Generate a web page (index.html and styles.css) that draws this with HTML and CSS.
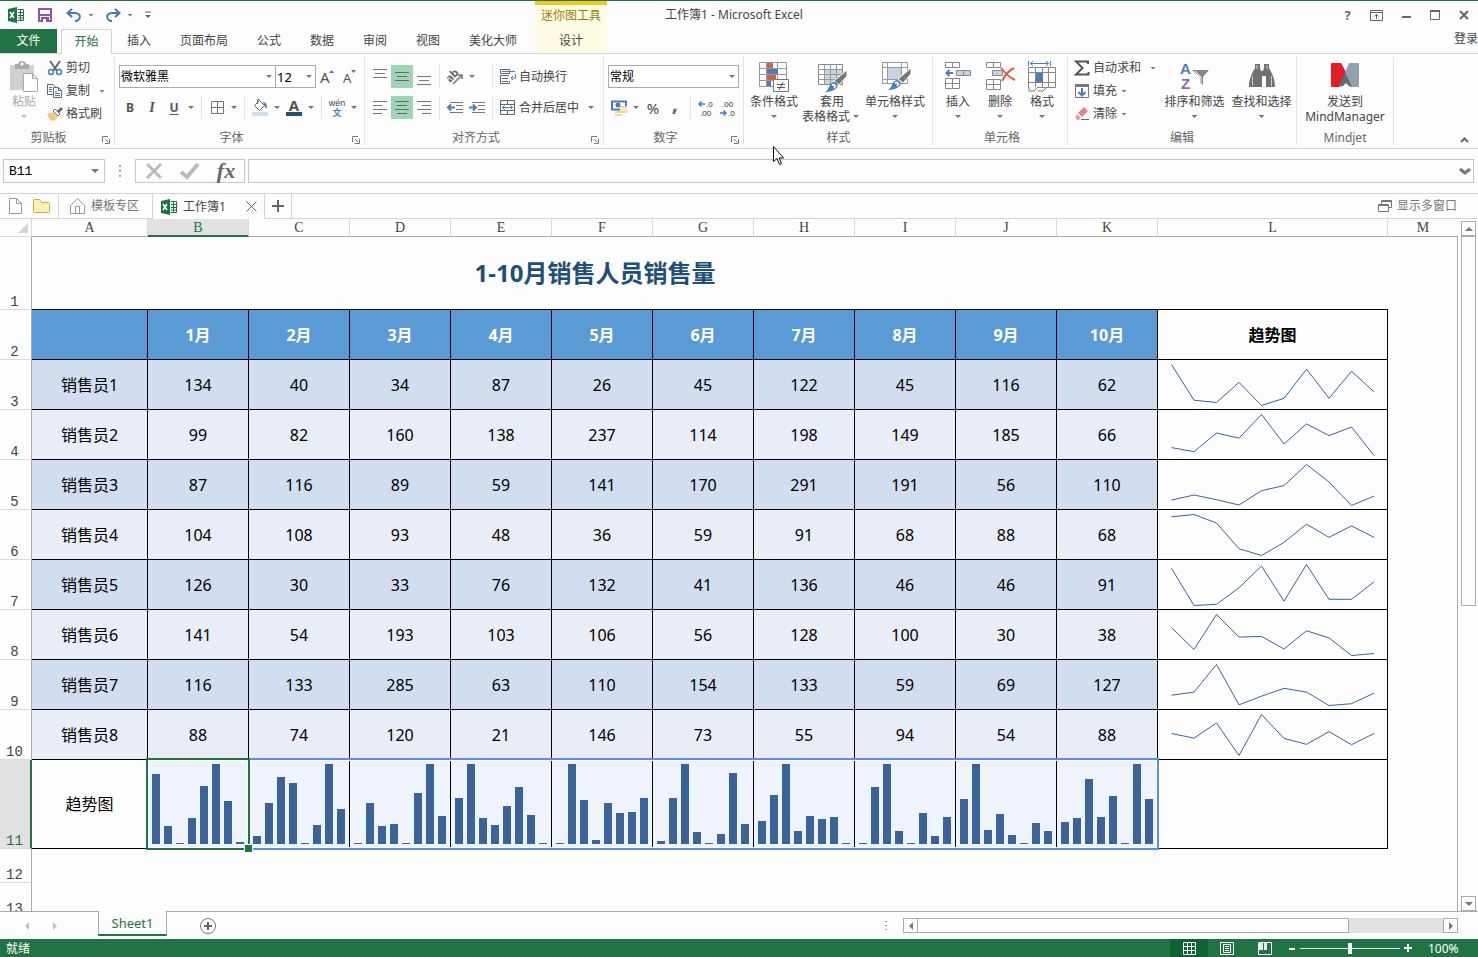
FILE: index.html
```html
<!DOCTYPE html>
<html lang="zh-CN">

<head>
    <meta charset="UTF-8">
    <meta name="viewport" content="width=device-width, initial-scale=1.0">
    <title>工作簿1 - Microsoft Excel</title>
    <link rel="stylesheet" href="styles.css">
</head>

<body>
    <header class="header">
        <div class="header-left">
            <div class="quick-access">
                <span class="tool logo">
                    <svg width="16" height="16"><path d="M0 2 9 0v16l-9-2z" fill="#217346"/><path d="M2 5l4 6M6 5l-4 6" stroke="#fff" stroke-width="1.5"/><path d="M9.500 2.500h6v11h-6M10 5.500h5M10 8.500h5M10 11h5M12.500 3v10" stroke="#217346" fill="none"/></svg>
                </span>
                <button class="tool" aria-label="保存">
                    <svg width="14" height="14"><path d="M1 1h12v12H1z" fill="none" stroke="#8a55ab" stroke-width="2"/><path d="M1 6h12v2H1zM3 9h8v4H3z" fill="#8a55ab"/><path d="M5 11h3v3H5z" fill="#fff"/></svg>
                </button>
                <span class="split">
                    <button class="tool" aria-label="撤消">
                        <svg width="16" height="14"><path d="M6 1 1.500 5 6 9M2 5h7c7 0 6 8 0 8" fill="none" stroke="#4678b0" stroke-width="2"/></svg>
                    </button>
                    <i class="caret"></i>
                </span>
                <span class="split">
                    <button class="tool" aria-label="恢复">
                        <svg width="16" height="14"><path d="M10 1l4.500 4L10 9M14 5H7C0 5 1 13 7 13" fill="none" stroke="#4678b0" stroke-width="2"/></svg>
                    </button>
                    <i class="caret"></i>
                </span>
                <button class="customize" aria-label="自定义快速访问工具栏"><svg width="6" height="8"><path d="M0 1h6" stroke="#666"/><path d="M0 4h6L3 7z" fill="#666"/></svg></button>
            </div>
            <nav class="tabs">
                <button class="tab file-tab">文件</button>
                <button class="tab active">开始</button>
                <button class="tab">插入</button>
                <button class="tab">页面布局</button>
                <button class="tab">公式</button>
                <button class="tab">数据</button>
                <button class="tab">审阅</button>
                <button class="tab">视图</button>
                <button class="tab">美化大师</button>
            </nav>
        </div>
        <div class="context-tabs">
            <span class="context-title">迷你图工具</span>
            <button class="tab">设计</button>
        </div>
        <div class="header-right">
            <div class="title-row">
                <span class="window-title">工作簿1 - Microsoft Excel</span>
                <button class="window-button help" aria-label="帮助">?</button>
                <button class="window-button" aria-label="功能区显示选项"><svg width="13" height="11"><path d="M.5.5h12v10H.5zM0 2.500h13M6.500 4v5M4.500 6.500l2-2 2 2" fill="none" stroke="#666"/></svg></button>
                <button class="window-button" aria-label="最小化"><svg width="10" height="10"><path d="M1 7h9" stroke="#666" stroke-width="2"/></svg></button>
                <button class="window-button" aria-label="最大化"><svg width="10" height="10"><path d="M.5 1h9v8.500h-9z" fill="none" stroke="#666"/><path d="M0 1h10" stroke="#666" stroke-width="2"/></svg></button>
                <button class="window-button" aria-label="关闭"><svg width="10" height="10"><path d="M1 1l8 8M9 1 1 9" stroke="#666" stroke-width="2"/></svg></button>
            </div>
            <a class="sign-in" href="#">登录</a>
        </div>
    </header>

    <section class="ribbon">
        <div class="group clipboard">
            <div class="group-body">
                <button class="big disabled">
                    <svg width="30" height="32"><path d="M1 4h24v25H1z" fill="#d0d0d0"/><path d="M6 3h3c0-4 8-4 8 0h3v5H6z" fill="#aaa"/><circle cx="13" cy="3" r="1.500" fill="#fff"/><path d="M14.500 12.500h9l5 5v13h-14zM23.500 12.500v5h5" fill="#fff" stroke="#aaa"/></svg>
                    <span>粘贴</span>
                    <i class="caret"></i>
                </button>
                <div class="small-list">
                    <button class="small">
                        <svg width="16" height="16"><path d="M3 1l7 10M13 1 6 11" stroke="#666" stroke-width="2"/><g fill="none" stroke="#4a7ebb" stroke-width="1.500"><circle cx="4" cy="12" r="2.500"/><circle cx="12" cy="12" r="2.500"/></g></svg>
                        剪切
                    </button>
                    <button class="small">
                        <svg width="16" height="16"><path d="M6 11.500H.5v-10H6l3 3" fill="none" stroke="#666"/><path d="M2 4.500h3M2 6.500h3M2 8.500h3" stroke="#4a7ebb"/><path d="M6.500 4.500h5l3 3v7h-8zM11.500 4.500v3h3" fill="#fff" stroke="#666"/><path d="M8 8.500h2M8 10.500h5M8 12.500h5" stroke="#4a7ebb"/></svg>
                        复制<i class="caret far"></i>
                    </button>
                    <button class="small">
                        <svg width="16" height="16"><path d="M0 8l6-2 5 5-4 4-4-1z" fill="#f0c878"/><path d="M6 5l5 5 2-2-5-5z" fill="#fff" stroke="#666"/><path d="M10 5l4-4 2 2-4 4z" fill="#666"/></svg>
                        格式刷
                    </button>
                </div>
            </div>
            <div class="group-label">剪贴板</div>
            <svg class="launcher" width="8" height="8"><path d="M.5 6V.5H6M3 3l3 3M7.500 3v4.500H3" fill="none" stroke="#777"/></svg>
        </div>

        <div class="group font">
            <div class="group-body rows">
                <div class="row">
                    <span class="combo font-name"><select aria-label="字体"><option>微软雅黑</option></select><i class="caret"></i></span>
                    <span class="combo font-size"><select aria-label="字号"><option>12</option></select><i class="caret"></i></span>
                    <button class="tool" aria-label="增大字号"><svg width="14" height="16"><text x="0" y="14" class="grow-letter">A</text><path d="M9 4h5l-2.500-3z" fill="#4a7ebb"/></svg></button>
                    <button class="tool" aria-label="减小字号"><svg width="14" height="16"><text x="1" y="14" class="shrink-letter">A</text><path d="M9 1h5l-2.500 3z" fill="#4a7ebb"/></svg></button>
                </div>
                <div class="row">
                    <button class="tool bold">B</button>
                    <button class="tool italic">I</button>
                    <button class="tool underline">U</button>
                    <i class="caret"></i>
                    <i class="sep"></i>
                    <button class="tool" aria-label="边框"><svg width="13" height="13"><path d="M.5.5h12v12H.5zM6.500 0v13M0 6.500h13" fill="none" stroke="#777"/></svg></button>
                    <i class="caret"></i>
                    <i class="sep"></i>
                    <button class="tool" aria-label="填充颜色"><svg width="16" height="17"><path d="M2.500 6.500l5-5 5 5-5 5zM5.500 5V.5h2" fill="#fff" stroke="#666"/><path d="M11 3c5 1 4 5 3 7l-2-4z" fill="#4a7ebb"/><path d="M0 13h16v4H0z" fill="#d2deef"/></svg></button>
                    <i class="caret"></i>
                    <button class="tool" aria-label="字体颜色"><svg width="16" height="17"><text x="8" y="12" class="color-letter">A</text><path d="M0 13h16v4H0z" fill="#1f4e79"/></svg></button>
                    <i class="caret"></i>
                    <i class="sep"></i>
                    <button class="tool" aria-label="拼音"><svg width="20" height="20"><text x="10" y="8" class="pinyin">wén</text><text x="10" y="18" class="wen">文</text></svg></button>
                    <i class="caret"></i>
                </div>
            </div>
            <div class="group-label">字体</div>
            <svg class="launcher" width="8" height="8"><path d="M.5 6V.5H6M3 3l3 3M7.500 3v4.500H3" fill="none" stroke="#777"/></svg>
        </div>

        <div class="group align">
            <div class="group-body rows">
                <div class="row">
                    <button class="tool" aria-label="顶端对齐"><svg width="14" height="18"><path d="M0 1.500h14M2 5.500h10M0 9.500h14" stroke="#777"/></svg></button>
                    <button class="tool on" aria-label="垂直居中"><svg width="14" height="18"><path d="M0 4.500h14M2 8.500h10M0 12.500h14" stroke="#666"/></svg></button>
                    <button class="tool" aria-label="底端对齐"><svg width="14" height="18"><path d="M0 8.500h14M2 12.500h10M0 16.500h14" stroke="#777"/></svg></button>
                    <i class="sep"></i>
                    <span class="pair">
                        <button class="tool" aria-label="方向"><svg width="17" height="16"><text x="0" y="11" class="rotated" transform="rotate(-45 5 9)">ab</text><path d="M6 15l9-9M11 6h4v4" fill="none" stroke="#777" stroke-width="1.500"/></svg></button>
                        <i class="caret"></i>
                    </span>
                    <i class="sep"></i>
                    <button class="small">
                        <svg width="16" height="16"><path d="M9.500 5V.5h-9v4h9M9 6.500H.5v8h9V12M2 9.500h6M2 12.500h6" fill="none" stroke="#666"/><path d="M2 2.500h13M15.500 5v4H11M13 7l-2 2 2 2" fill="none" stroke="#4a7ebb"/></svg>
                        自动换行
                    </button>
                </div>
                <div class="row">
                    <button class="tool" aria-label="左对齐"><svg width="14" height="13"><path d="M0 .5h14M0 4.500h9M0 8.500h14M0 12.500h9" stroke="#777"/></svg></button>
                    <button class="tool on" aria-label="居中"><svg width="14" height="13"><path d="M0 .5h14M2 4.500h10M0 8.500h14M2 12.500h10" stroke="#666"/></svg></button>
                    <button class="tool" aria-label="右对齐"><svg width="14" height="13"><path d="M0 .5h14M5 4.500h9M0 8.500h14M5 12.500h9" stroke="#777"/></svg></button>
                    <i class="sep"></i>
                    <span class="pair">
                        <button class="tool" aria-label="减少缩进"><svg width="16" height="13"><path d="M3 1.500h13M9 4.500h7M9 8.500h7M3 11.500h13" stroke="#777"/><path d="M1 6.500h7M4 3.500l-3 3 3 3" fill="none" stroke="#4a7ebb" stroke-width="2"/></svg></button>
                        <button class="tool" aria-label="增加缩进"><svg width="16" height="13"><path d="M3 1.500h13M9 4.500h7M9 8.500h7M3 11.500h13" stroke="#777"/><path d="M0 6.500h7M4 3.500l3 3-3 3" fill="none" stroke="#4a7ebb" stroke-width="2"/></svg></button>
                    </span>
                    <i class="sep"></i>
                    <button class="small">
                        <svg width="16" height="16"><path d="M.5.5h14v14H.5zM0 4.500h15M0 10.500h15M7.500 0v4M7.500 11v4" fill="none" stroke="#666"/><path d="M2 7.500h11M4.500 5.500l-2 2 2 2M10.500 5.500l2 2-2 2" fill="none" stroke="#4a7ebb"/></svg>
                        合并后居中<i class="caret far"></i>
                    </button>
                </div>
            </div>
            <div class="group-label">对齐方式</div>
            <svg class="launcher" width="8" height="8"><path d="M.5 6V.5H6M3 3l3 3M7.500 3v4.500H3" fill="none" stroke="#777"/></svg>
        </div>

        <div class="group number">
            <div class="group-body rows">
                <div class="row">
                    <span class="combo format"><select aria-label="数字格式"><option>常规</option></select><i class="caret"></i></span>
                </div>
                <div class="row">
                    <button class="tool" aria-label="会计数字格式"><svg width="16" height="16"><path d="M1 1.500h14v8H1z" fill="#fff" stroke="#4a7ebb" stroke-width="2"/><circle cx="7" cy="5" r="2.500" fill="#4a7ebb"/><path d="M9 6h7v7H9zM4 11h7v5H4z" fill="#f5d590"/><path d="M9 8.500h7M9 10.500h7M4 13.500h7" stroke="#fff"/></svg></button>
                    <i class="caret"></i>
                    <button class="tool percent">%</button>
                    <button class="tool comma">,</button>
                    <i class="sep"></i>
                    <button class="tool" aria-label="增加小数位数"><svg width="16" height="18"><text x="8" y="8" class="decimal">.0</text><text x="2" y="17" class="decimal">.00</text><path d="M1 5h6M3.500 2.500 1 5l2.500 2.500" fill="none" stroke="#4a7ebb" stroke-width="1.500"/></svg></button>
                    <button class="tool" aria-label="减少小数位数"><svg width="16" height="18"><text x="2" y="8" class="decimal">.00</text><text x="8" y="17" class="decimal">.0</text><path d="M0 14h6M3.500 11.500 6 14l-2.500 2.500" fill="none" stroke="#4a7ebb" stroke-width="1.500"/></svg></button>
                </div>
            </div>
            <div class="group-label">数字</div>
            <svg class="launcher" width="8" height="8"><path d="M.5 6V.5H6M3 3l3 3M7.500 3v4.500H3" fill="none" stroke="#777"/></svg>
        </div>

        <div class="group styles">
            <div class="group-body">
                <button class="big">
                    <svg width="30" height="32"><path d="M.5 1.500h27v24H.5zM0 7.500h28M0 13.500h28M0 19.500h28M7.500 1v25M18.500 1v25" fill="#fff" stroke="#999"/><path d="M8 2h6v5H8zM8 14h9v5H8z" fill="#d9603b"/><path d="M8 8h11v5H8zM8 20h4v5H8z" fill="#4a7ebb"/><path d="M14.500 18.500h15v12h-15z" fill="#fff" stroke="#777"/><path d="M18 23.500h8M18 26.500h8M24 21l-4 8" stroke="#555"/></svg>
                    <span>条件格式</span>
                    <i class="caret"></i>
                </button>
                <button class="big">
                    <svg width="30" height="32"><path d="M1.500 3.500h24v20h-24z" fill="#fff" stroke="#888"/><path d="M8 9h17v14H8z" fill="#c3d4e8"/><path d="M1 8.500h25M1 13.500h25M1 18.500h25M7.500 3v21M13.500 3v21M19.500 3v21" stroke="#999"/><path d="M30 9v6l-8 9-5-4z" fill="#777" stroke="#fff"/><path d="M8 31c5-2 3-9 9-10 7 1 4 10-9 10z" fill="#4a7ebb"/><path d="M15 24c3-1 4 1 2 3" fill="none" stroke="#fff" stroke-width="2"/></svg>
                    <span>套用</span>
                    <span class="second-line">表格格式<i class="caret"></i></span>
                </button>
                <button class="big wide">
                    <svg width="30" height="32"><path d="M2.500 1.500h25v21h-25zM2 6.500h26M2 18.500h26M7.500 1v22M21.500 1v22" fill="#fff" stroke="#999"/><path d="M8 7h13v11H8z" fill="#c3d4e8"/><path d="M31 7v6l-8 9-5-4z" fill="#777" stroke="#fff"/><path d="M8 29c5-2 3-9 9-10 7 1 4 10-9 10z" fill="#4a7ebb"/><path d="M15 22c3-1 4 1 2 3" fill="none" stroke="#fff" stroke-width="2"/></svg>
                    <span>单元格样式</span>
                    <i class="caret"></i>
                </button>
            </div>
            <div class="group-label">样式</div>
        </div>

        <div class="group cells">
            <div class="group-body">
                <button class="big">
                    <svg width="28" height="32"><path d="M1.500 1.500h14v5h-14zM8.500 1v6M1.500 17.500h14v10h-14zM1 22.500h15M8.500 17v11" fill="#fff" stroke="#888"/><path d="M12.500 9.500h14v5h-14zM19.500 9v6" fill="#c3d4e8" stroke="#888"/><path d="M2 12h7M5.500 9 2.500 12l3 3" fill="none" stroke="#4a7ebb" stroke-width="2"/></svg>
                    <span>插入</span>
                    <i class="caret"></i>
                </button>
                <button class="big">
                    <svg width="30" height="32"><path d="M1.500 1.500h14v5h-14zM8.500 1v6M1.500 18.500h14v10h-14zM1 23.500h15M8.500 18v11" fill="#fff" stroke="#888"/><path d="M7.500 9.500h10v5h-10z" fill="#c3d4e8" stroke="#888"/><path d="M16 7c4 5 8 9 14 12M29 7c-6 3-9 7-12 13" fill="none" stroke="#d9603b" stroke-width="2"/></svg>
                    <span>删除</span>
                    <i class="caret"></i>
                </button>
                <button class="big">
                    <svg width="28" height="32"><path d="M.5 0v5M22.500 0v5M2 2.500h19M5 0 2.500 2.500 5 5M18 0l2.500 2.500L18 5" fill="none" stroke="#4a7ebb"/><path d="M.5 6.500h27v20H.5zM0 11.500h28M0 21.500h28M7.500 6v21M20.500 6v21M14.500 6v5M14.500 22v5" fill="#fff" stroke="#888"/><path d="M8 12h7v9H8z" fill="#4a7ebb"/><path d="M1 26v4h5l4-4M10 30h5l4-4" fill="#fff" stroke="#777"/></svg>
                    <span>格式</span>
                    <i class="caret"></i>
                </button>
            </div>
            <div class="group-label">单元格</div>
        </div>

        <div class="group edit">
            <div class="group-body">
                <div class="small-list">
                    <button class="small">
                        <svg width="16" height="16"><path d="M14 4V1.500H2L8.500 8 2 14.500h12.500V12" fill="none" stroke="#555" stroke-width="2"/></svg>
                        自动求和<i class="caret far"></i>
                    </button>
                    <button class="small">
                        <svg width="16" height="16"><path d="M1.500 1.500h13v13h-13z" fill="#fff" stroke="#777"/><path d="M1 1h14v3H1z" fill="#777"/><path d="M8 5v7M4.500 9 8 12.500 11.500 9" fill="none" stroke="#4a7ebb" stroke-width="2"/></svg>
                        填充<i class="caret"></i>
                    </button>
                    <button class="small">
                        <svg width="16" height="16"><path d="M4 7l6-6 4 4-6 6z" fill="#e8808c"/><path d="M3 8l4 4-2 2H3l-2-3z" fill="#f0a0a8"/><path d="M7 13.500h8" stroke="#666"/></svg>
                        清除<i class="caret"></i>
                    </button>
                </div>
                <button class="big">
                    <svg width="30" height="32"><text x="0" y="13" class="sort-letter sort-a">A</text><text x="1" y="28" class="sort-letter sort-z">Z</text><path d="M12 9h17l-6 7v8l-3-3v-5z" fill="#888"/><path d="M15 10l6 6v5" fill="none" stroke="#fff"/></svg>
                    <span>排序和筛选</span>
                    <i class="caret"></i>
                </button>
                <button class="big">
                    <svg width="26" height="32"><path d="M6 3h5v4l1 3h2l1-3V3h5v4c3 5 6 11 6 19h-9V15h-4v11H0C0 18 3 12 6 7z" fill="#707070"/><path d="M8 4v4M18 4v4M3.500 15v10M22.500 15v10" fill="none" stroke="#ccc"/></svg>
                    <span>查找和选择</span>
                    <i class="caret"></i>
                </button>
            </div>
            <div class="group-label">编辑</div>
        </div>

        <div class="group mindjet">
            <div class="group-body">
                <button class="big">
                    <svg width="28" height="32"><path d="M2 2h8l5 9-7 15H2c-2 0-2 0-2-2V4c0-2 0-2 2-2z" fill="#e31e26"/><path d="M18 2h8c2 0 2 0 2 2v20c0 2 0 2-2 2h-6l-6-15z" fill="#93a1ab"/><path d="M14 11l7 15-3-1-3-3-3 3-4 1z" fill="#596d7a"/></svg>
                    <span>发送到</span>
                    <span class="second-line">MindManager</span>
                </button>
            </div>
            <div class="group-label">Mindjet</div>
        </div>
        <button class="collapse" aria-label="折叠功能区"><svg width="9" height="6"><path d="M1 5l3.500-3.500L8 5" fill="none" stroke="#666" stroke-width="2"/></svg></button>
        <svg class="pointer" width="13" height="20"><path d="M1.500 1.500v15l3.500-3 2.500 6 2-1-2.500-5.500h4.500z" fill="#fff" stroke="#112"/></svg>
    </section>

    <section class="formula-bar">
        <div class="name-box"><input type="text" value="B11" aria-label="名称框"><i class="caret"></i></div>
        <span class="dots"><svg width="3" height="12"><path d="M0 0h2v2H0zM0 5h2v2H0zM0 10h2v2H0z" fill="#aaa"/></svg></span>
        <div class="formula-buttons">
            <button aria-label="取消"><svg width="18" height="18"><path d="M2 2l14 14M16 2 2 16" stroke="#bbb" stroke-width="3"/></svg></button>
            <button aria-label="输入"><svg width="20" height="18"><path d="M1 10l6 5L18 2" fill="none" stroke="#bbb" stroke-width="4"/></svg></button>
            <button class="fx">fx</button>
        </div>
        <div class="formula-input">
            <input type="text" aria-label="编辑栏">
            <svg width="12" height="9"><path d="M1 2l5 4 5-4" fill="none" stroke="#777" stroke-width="3"/></svg>
        </div>
    </section>

    <section class="book-tabs">
        <div class="book-tools">
            <button aria-label="新建"><svg width="13" height="16"><path d="M.5.5h7l5 5v10H.5zM7.500.5v5h5" fill="#fff" stroke="#999"/></svg></button>
            <button aria-label="打开"><svg width="17" height="14"><path d="M1.500.5h5l2 3h7q1 0 1 1v8q0 1-1 1h-14q-1 0-1-1v-11q0-1 1-1z" fill="#faf0b0" stroke="#d0a850"/></svg></button>
        </div>
        <button class="book home">
            <svg width="15" height="16"><path d="M.5 7.500 7.500.5l7 7v8H.5zM5.500 15V8.500h4V15" fill="none" stroke="#999"/></svg>
            模板专区
        </button>
        <div class="book current">
            <svg width="16" height="16"><path d="M0 2 9 0v16l-9-2z" fill="#217346"/><path d="M2 5l4 6M6 5l-4 6" stroke="#fff" stroke-width="1.5"/><path d="M9.500 2.500h6v11h-6M10 5.500h5M10 8.500h5M10 11h5M12.500 3v10" stroke="#217346" fill="none"/></svg>
            <span>工作簿1</span>
            <button aria-label="关闭工作簿"><svg width="11" height="11"><path d="M.5.5l10 10M10.500.5l-10 10" stroke="#666"/></svg></button>
        </div>
        <button class="book-add" aria-label="新建标签"><svg width="12" height="12"><path d="M6 0v12M0 6h12" stroke="#666" stroke-width="2"/></svg></button>
        <button class="multi-window">
            <svg width="14" height="12"><path d="M3.500 4V.5h10v7H11M.5 4.500h10v7H.5zM0 5.500h11M3 1.500h11" fill="none" stroke="#777"/></svg>
            显示多窗口
        </button>
    </section>

    <main class="workspace">
        <div class="sheet">
            <table>
                <colgroup>
                    <col class="col-row">
                    <col class="col-name">
                    <col class="col-month" span="10">
                    <col class="col-trend">
                    <col>
                </colgroup>
                <thead>
                    <tr>
                        <th class="corner"><svg width="10" height="10"><path d="M10 0v10H0z" fill="#d4d4d4"/></svg></th>
                        <th>A</th>
                        <th class="selected">B</th>
                        <th>C</th>
                        <th>D</th>
                        <th>E</th>
                        <th>F</th>
                        <th>G</th>
                        <th>H</th>
                        <th>I</th>
                        <th>J</th>
                        <th>K</th>
                        <th>L</th>
                        <th class="last">M</th>
                    </tr>
                </thead>
                <tbody id="cells"></tbody>
            </table>
        </div>
        <div class="v-scroll">
            <button aria-label="向上滚动"><svg width="8" height="4"><path d="M0 4h8L4 0z" fill="#777"/></svg></button>
            <div class="v-track"><div class="v-thumb"></div></div>
            <button aria-label="向下滚动"><svg width="8" height="4"><path d="M0 0h8L4 4z" fill="#777"/></svg></button>
        </div>
    </main>

    <section class="sheet-bar">
        <button class="nav" aria-label="上一个工作表"><svg width="4" height="8"><path d="M4 0v8L0 4z" fill="#c0c0c0"/></svg></button>
        <button class="nav" aria-label="下一个工作表"><svg width="4" height="8"><path d="M0 0v8l4-4z" fill="#c0c0c0"/></svg></button>
        <button class="sheet-tab">Sheet1</button>
        <button class="sheet-add" aria-label="新工作表"><svg width="16" height="16"><circle cx="8" cy="8" r="7.500" fill="none" stroke="#777"/><path d="M8 4v8M4 8h8" stroke="#666" stroke-width="2"/></svg></button>
        <span class="sheet-dots"><svg width="3" height="12"><path d="M0 1h2v1H0zM0 5h2v1H0zM0 9h2v1H0z" fill="#999"/></svg></span>
        <div class="h-scroll">
            <button aria-label="向左滚动"><svg width="4" height="8"><path d="M4 0v8L0 4z" fill="#777"/></svg></button>
            <div class="h-track"><div class="h-thumb"></div></div>
            <button aria-label="向右滚动"><svg width="4" height="8"><path d="M0 0v8l4-4z" fill="#777"/></svg></button>
        </div>
    </section>

    <footer class="status-bar">
        <span class="ready">就绪</span>
        <button class="view on" aria-label="普通"><svg width="13" height="13"><path d="M.5.5h12v12H.5zM4.500 0v13M8.500 0v13M0 4.500h13M0 8.500h13" fill="none" stroke="#fff"/></svg></button>
        <button class="view" aria-label="页面布局"><svg width="14" height="13"><path d="M.5.5h13v12H.5zM3.500 2.500h7v8h-7zM5 4.500h4M5 6.500h4M5 8.500h4" fill="none" stroke="#fff"/></svg></button>
        <button class="view" aria-label="分页预览"><svg width="14" height="13"><path d="M.5.500h13v12H.5z" fill="none" stroke="#fff"/><path d="M1 1h4v7H1zM6 1h3v7H6z" fill="#e8f0ea"/></svg></button>
        <button class="zoom-button" aria-label="缩小"><svg width="8" height="8"><path d="M1 5h6" stroke="#fff" stroke-width="2"/></svg></button>
        <input class="zoom-slider" type="range" min="0" max="100" value="50" aria-label="缩放">
        <button class="zoom-button" aria-label="放大"><svg width="8" height="8"><path d="M0 4h8M4 0v8" stroke="#fff" stroke-width="2"/></svg></button>
        <span class="zoom-value">100%</span>
    </footer>

    <script src="script.js"></script>
</body>

</html>
```

FILE: styles.css
```css
* {
    box-sizing: border-box;
}

body {
    margin: 0;
    height: 100vh;
    display: flex;
    flex-direction: column;
    overflow: hidden;
    background: #fdfdfd;
    color: #444;
    font-family: "Noto Sans", "Noto Sans CJK SC", sans-serif;
    font-size: 12px;
    line-height: 16px;
}

button,
input,
select {
    margin: 0;
    padding: 0;
    border: 0;
    background: none;
    color: inherit;
    font: inherit;
}

button {
    display: flex;
    align-items: center;
    justify-content: center;
    white-space: nowrap;
}

svg {
    display: block;
    flex: none;
    overflow: visible;
}

/* small drop-down arrow */
.caret {
    flex: none;
    width: 12px;
    height: 3px;
    background: #777;
    clip-path: polygon(3px 0, 9px 0, 6px 3px);
}

.caret.far {
    margin-left: 3px;
}

/* title and tabs */
.header {
    display: flex;
    border-top: 1px solid #217346;
    border-bottom: 1px solid #d4d4d4;
}

.quick-access {
    display: flex;
    align-items: center;
    gap: 7px;
    height: 28px;
    padding-left: 5px;
}

.logo {
    display: flex;
    align-items: center;
    justify-content: center;
}

.split {
    display: flex;
    align-items: center;
}

.split .caret {
    width: 10px;
}

.customize {
    width: 14px;
}

.tabs {
    display: flex;
    gap: 1px;
    height: 24px;
}

.tab {
    height: 24px;
    padding: 0 14px;
}

.file-tab {
    width: 57px;
    margin-right: 3px;
    background: #217346;
    color: #fff;
}

.tab.active {
    width: 51px;
    height: 25px;
    padding: 0;
    border: 1px solid #d4d4d4;
    border-bottom: 0;
    background: #fdfdfd;
    color: #217346;
}

.context-tabs {
    width: 72px;
    margin-left: 4px;
    border-top: 4px solid #f5c71b;
    background: #fefce4;
    text-align: center;
}

.context-title {
    display: block;
    height: 24px;
    line-height: 22px;
    color: #a07c10;
}

.context-tabs .tab {
    width: 100%;
}

.header-right {
    flex: 1;
}

.title-row {
    display: flex;
    align-items: center;
    height: 28px;
}

.window-title {
    flex: 1;
    padding-left: 58px;
}

.window-button {
    width: 29px;
    height: 28px;
}

.help {
    font-weight: bold;
    font-size: 13px;
    color: #666;
}

.sign-in {
    display: block;
    width: 24px;
    margin-left: auto;
    overflow: hidden;
    white-space: nowrap;
    line-height: 20px;
    color: #444;
    text-decoration: none;
}

/* ribbon */
.ribbon {
    position: relative;
    display: flex;
    padding: 3px 0;
    border-bottom: 1px solid #d4d4d4;
}

.group {
    position: relative;
    flex: none;
    height: 88px;
    border-right: 1px solid #e1e1e1;
}

.group-body {
    display: flex;
    height: 73px;
}

.group-body.rows {
    flex-direction: column;
    gap: 8px;
    padding-top: 8px;
}

.group-label {
    text-align: center;
    color: #666;
}

.launcher {
    position: absolute;
    right: 4px;
    bottom: 1px;
}

.clipboard {
    width: 115px;
    padding-left: 1px;
}

.clipboard .group-label {
    padding-right: 18px;
}

.font {
    width: 250px;
    padding-left: 4px;
}

.font .group-label,
.align .group-label,
.number .group-label {
    padding-right: 20px;
}

.align {
    width: 239px;
    padding-left: 4px;
}

.number {
    width: 140px;
    padding-left: 4px;
}

.styles {
    width: 189px;
    padding-left: 1px;
}

.cells {
    width: 135px;
    padding-left: 4px;
}

.edit {
    width: 229px;
    padding-left: 6px;
}

.edit .group-label {
    padding-right: 6px;
}

.mindjet {
    width: 97px;
}

.row {
    display: flex;
    align-items: center;
    height: 23px;
}

.tool {
    flex: none;
    width: 22px;
    height: 23px;
}

.tool.on {
    background: #9fd5b7;
}

.sep {
    flex: none;
    width: 1px;
    height: 23px;
    margin: 0 4px;
    background: #e1e1e1;
}

.pair {
    display: flex;
    align-items: center;
    width: 44px;
}

.combo {
    position: relative;
    height: 23px;
}

.combo select {
    width: 100%;
    height: 23px;
    padding-left: 1px;
    border: 1px solid #ababab;
    border-radius: 0;
    appearance: none;
    background: #fff;
    color: #000;
}

.combo .caret {
    position: absolute;
    right: 1px;
    top: 10px;
}

.font-name {
    width: 157px;
}

.font-size {
    width: 40px;
}

.font-size select {
    border-left: 0;
    font-size: 13px;
}

.format {
    width: 131px;
}

.bold,
.italic,
.underline {
    font-weight: bold;
    color: #555;
}

.italic {
    font-family: "Liberation Serif", serif;
    font-size: 14px;
    font-style: italic;
}

.underline {
    text-decoration: underline;
    text-underline-offset: 2px;
}

.percent {
    font-size: 15px;
}

.comma {
    padding-bottom: 12px;
    font-size: 22px;
    font-weight: bold;
    color: #666;
}

.grow-letter {
    font-size: 15px;
    fill: #555;
}

.shrink-letter {
    font-size: 13px;
    fill: #555;
}

.color-letter {
    font-size: 15px;
    font-weight: bold;
    text-anchor: middle;
    fill: #555;
}

.pinyin {
    font-family: "Liberation Sans", sans-serif;
    font-size: 9px;
    text-anchor: middle;
    fill: #444;
}

.wen {
    font-family: "Noto Sans CJK SC", sans-serif;
    font-size: 9px;
    font-weight: bold;
    text-anchor: middle;
    fill: #4a7ebb;
}

.rotated {
    font-size: 11px;
    font-weight: bold;
    fill: #666;
}

.decimal {
    font-family: "Liberation Sans", sans-serif;
    font-size: 8px;
    fill: #333;
}

.sort-letter {
    font-family: "Liberation Sans", sans-serif;
    font-size: 15px;
    font-weight: bold;
}

.sort-a {
    fill: #4a7ebb;
}

.sort-z {
    fill: #9560b5;
}

.small {
    height: 22px;
    gap: 3px;
}

.small .caret {
    margin-left: -2px;
}

.small .caret.far {
    margin-left: 3px;
}

.row .small {
    padding-left: 3px;
}

.small-list {
    display: flex;
    flex-direction: column;
    align-items: flex-start;
    gap: 1px;
}

.edit .small-list {
    width: 87px;
}

.big {
    flex-direction: column;
    justify-content: flex-start;
    padding-top: 4px;
    line-height: 15px;
}

.big svg {
    margin-bottom: 1px;
}

.big > .caret {
    margin-top: 6px;
}

.second-line {
    display: flex;
    align-items: center;
}

.disabled {
    color: #aaa;
}

.disabled .caret {
    background: #bbb;
}

.clipboard .big {
    width: 46px;
}

.styles .big {
    width: 58px;
}

.styles .wide {
    width: 68px;
}

.cells .big {
    width: 42px;
}

.edit .big {
    width: 67px;
}

.mindjet .big {
    width: 96px;
}

.collapse {
    position: absolute;
    right: 9px;
    bottom: 5px;
}

.pointer {
    position: absolute;
    left: 772px;
    top: 91px;
    z-index: 5;
}

/* formula bar */
.formula-bar {
    display: flex;
    padding: 10px 4px 10px 3px;
    border-bottom: 1px solid #d4d4d4;
}

.name-box,
.formula-buttons,
.formula-input {
    display: flex;
    align-items: center;
    height: 24px;
    border: 1px solid #c6c6c6;
}

.name-box {
    width: 102px;
    padding: 0 3px 0 5px;
}

.name-box input {
    width: 100%;
    min-width: 0;
    padding-top: 2px;
    font-family: "Liberation Mono", monospace;
    font-size: 13px;
    color: #000;
}

.name-box .caret {
    height: 4px;
    clip-path: polygon(2px 0, 10px 0, 6px 4px);
}

.dots {
    display: flex;
    align-items: center;
    justify-content: center;
    width: 30px;
}

.formula-buttons {
    width: 110px;
    margin-right: 3px;
}

.formula-buttons button {
    width: 36px;
}

.formula-buttons .fx {
    font-family: "Liberation Serif", serif;
    font-size: 22px;
    font-style: italic;
    font-weight: bold;
    color: #666;
}

.formula-input {
    flex: 1;
    padding-right: 2px;
}

.formula-input input {
    flex: 1;
}

/* workbook tabs */
.book-tabs {
    display: flex;
    height: 25px;
    border-bottom: 1px solid #d4d4d4;
}

.book-tools {
    display: flex;
    width: 59px;
    padding-left: 2px;
    border-right: 1px solid #d4d4d4;
}

.book-tools button {
    width: 26px;
}

.book {
    display: flex;
    align-items: center;
    gap: 6px;
    height: 24px;
    border-right: 1px solid #d4d4d4;
}

.home {
    width: 94px;
    padding-right: 2px;
    color: #777;
}

.current {
    width: 112px;
    height: 25px;
    padding: 0 7px 0 8px;
    background: #fdfdfd;
}

.current button {
    margin-left: auto;
}

.book-add {
    width: 27px;
    border-right: 1px solid #d4d4d4;
}

.multi-window {
    gap: 5px;
    margin-left: auto;
    padding-right: 21px;
    color: #777;
}

/* worksheet */
.workspace {
    flex: 1;
    display: flex;
    min-height: 0;
}

.sheet {
    flex: 1;
    min-width: 0;
    overflow: hidden;
}

table {
    width: 100%;
    table-layout: fixed;
    border-collapse: separate;
    border-spacing: 0;
}

.col-row {
    width: 32px;
}

.col-name {
    width: 116px;
}

.col-month {
    width: 101px;
}

.col-trend {
    width: 230px;
}

th,
td {
    padding: 0;
    text-align: center;
}

thead th {
    height: 18px;
    padding-top: 1px;
    border-right: 1px solid #d9d9d9;
    border-bottom: 1px solid #ababab;
    font-family: "Liberation Serif", serif;
    font-size: 14px;
    font-weight: normal;
    line-height: 16px;
}

thead .corner {
    border-bottom-color: #d9d9d9;
}

.corner svg {
    margin-left: 18px;
}

thead .selected {
    border-bottom: 2px solid #217346;
    background: #e1e1e1;
    color: #217346;
    line-height: 15px;
}

thead .last {
    border-right: 0;
}

.row-number {
    padding-right: 2px;
    border-right: 1px solid #ababab;
    border-bottom: 1px solid #d9d9d9;
    font-family: "Liberation Mono", monospace;
    font-size: 14px;
    font-weight: normal;
    line-height: 14px;
    vertical-align: bottom;
}

.row-number.selected {
    padding-right: 1px;
    border-right: 2px solid #217346;
    background: #e1e1e1;
    color: #217346;
}

.cell {
    height: 50px;
    border-right: 1px solid #000;
    border-bottom: 1px solid #000;
    color: #000;
    font-size: 16px;
    font-weight: normal;
    line-height: 24px;
}

.title {
    height: 73px;
    border-right: 0;
    color: #1f4e79;
    font-size: 24px;
    font-weight: bold;
}

.title-side {
    border-right: 0;
}

.month {
    background: #5b9bd5;
    color: #fff;
    font-weight: bold;
}

.trend-head {
    font-weight: bold;
}

.odd {
    background: #d2deef;
}

.even {
    background: #e9edf6;
}

.edge {
    border-right: 1px solid #ababab;
}

.empty {
    height: 34px;
}

.line {
    width: 100%;
    height: 49px;
}

.line polyline {
    fill: none;
    stroke: #3a6399;
}

.summary {
    height: 89px;
}

.column-cell {
    background: #eff3fc;
}

.columns {
    display: flex;
    align-items: flex-end;
    gap: 4px;
    height: 88px;
    padding: 4px;
}

.columns i {
    flex: 1;
    background: #3a6399;
}

/* selection frames drawn over the cells */
.anchor {
    position: relative;
}

.range,
.active-cell {
    position: absolute;
    top: -2px;
    bottom: -2px;
    left: -2px;
    border: 2px solid #5b8def;
    box-shadow: inset 0 0 0 1px #fff;
}

.range {
    width: 1013px;
}

.active-cell {
    right: -2px;
    border-color: #217346;
}

.active-cell::after {
    content: "";
    position: absolute;
    right: -5px;
    bottom: -5px;
    width: 7px;
    height: 7px;
    border: 1px solid #fff;
    background: #217346;
}

.v-scroll {
    display: flex;
    flex-direction: column;
    width: 20px;
    padding: 2px 2px 0 3px;
}

.v-scroll button,
.h-scroll button {
    flex: none;
    width: 15px;
    height: 15px;
    border: 1px solid #ababab;
}

.v-track {
    flex: 1;
}

.v-thumb {
    height: 56%;
    border: 1px solid #ababab;
}

/* sheet tabs */
.sheet-bar {
    display: flex;
    align-items: center;
    height: 28px;
    padding: 0 20px 0 13px;
    border-top: 1px solid #ababab;
}

.nav {
    width: 28px;
}

.sheet-tab {
    align-self: flex-start;
    width: 69px;
    height: 25px;
    margin-top: -1px;
    margin-left: 29px;
    border: solid #ababab;
    border-width: 0 1px;
    border-bottom: 2px solid #217346;
    background: #fdfdfd;
    color: #217346;
    font-size: 13px;
}

.sheet-add {
    margin-left: 33px;
}

.sheet-dots {
    margin-left: auto;
    margin-right: 15px;
}

.h-scroll {
    display: flex;
    width: 555px;
}

.h-track {
    flex: 1;
    background: #e1e1e1;
}

.h-thumb {
    width: 82%;
    height: 15px;
    border: 1px solid #ababab;
    border-left: 0;
    background: #fdfdfd;
}

/* status bar */
.status-bar {
    display: flex;
    align-items: center;
    height: 18px;
    padding-left: 6px;
    background: #217346;
    color: #fff;
}

.ready {
    flex: 1;
    padding-top: 2px;
}

.view {
    width: 38px;
    height: 18px;
}

.view.on {
    background: #0e6233;
}

.zoom-button {
    width: 16px;
}

.zoom-slider {
    width: 100px;
    height: 11px;
    appearance: none;
    background: linear-gradient(#fff, #fff) center / 100% 1px no-repeat;
}

.zoom-slider::-webkit-slider-thumb {
    appearance: none;
    width: 4px;
    height: 11px;
    background: #fff;
}

.zoom-value {
    width: 62px;
    padding-top: 2px;
    padding-left: 12px;
}
```

FILE: script.js
```js
const sales = [
    [134, 40, 34, 87, 26, 45, 122, 45, 116, 62],
    [99, 82, 160, 138, 237, 114, 198, 149, 185, 66],
    [87, 116, 89, 59, 141, 170, 291, 191, 56, 110],
    [104, 108, 93, 48, 36, 59, 91, 68, 88, 68],
    [126, 30, 33, 76, 132, 41, 136, 46, 46, 91],
    [141, 54, 193, 103, 106, 56, 128, 100, 30, 38],
    [116, 133, 285, 63, 110, 154, 133, 59, 69, 127],
    [88, 74, 120, 21, 146, 73, 55, 94, 54, 88]
];

// line sparkline for one person
function lineChart(values) {
    const min = Math.min(...values);
    const max = Math.max(...values);
    const points = values.map((v, i) => {
        const x = 13.5 + i * 22.5;
        const y = 45.5 - (v - min) / (max - min) * 41;
        return x + ',' + y.toFixed(1);
    });
    return `<svg class="line" viewBox="0 0 229 49"><polyline points="${points.join(' ')}"/></svg>`;
}

// column sparkline for one month
function columnChart(values) {
    const min = Math.min(...values);
    const max = Math.max(...values);
    const bars = values.map(v => {
        const height = Math.max(1, Math.ceil((v - min) / (max - min) * 80));
        return `<i style="height: ${height}px"></i>`;
    });
    return `<div class="columns">${bars.join('')}</div>`;
}

function row(number, cells, selected) {
    return `<tr><th class="row-number ${selected ? 'selected' : ''}">${number}</th>${cells}<td class="edge"></td></tr>`;
}

let html = row(1, '<td class="cell title" colspan="11">1-10月销售人员销售量</td><td class="cell title-side"></td>');

let months = '<td class="cell month"></td>';
for (let m = 1; m <= 10; m++) {
    months += `<th class="cell month">${m}月</th>`;
}
html += row(2, months + '<th class="cell trend-head">趋势图</th>');

sales.forEach((values, i) => {
    const shade = i % 2 === 0 ? 'odd' : 'even';
    let cells = `<th class="cell ${shade}">销售员${i + 1}</th>`;
    cells += values.map(v => `<td class="cell ${shade}">${v}</td>`).join('');
    cells += `<td class="cell">${lineChart(values)}</td>`;
    html += row(i + 3, cells);
});

let summary = '<th class="cell summary">趋势图</th>';
for (let m = 0; m < 10; m++) {
    const frames = m === 0 ? '<div class="range"></div><div class="active-cell"></div>' : '';
    summary += `<td class="cell summary column-cell ${m === 0 ? 'anchor' : ''}">${columnChart(sales.map(r => r[m]))}${frames}</td>`;
}
html += row(11, summary + '<td class="cell summary"></td>', true);

html += row(12, '<td class="empty" colspan="12"></td>');
html += row(13, '<td class="empty" colspan="12"></td>');

document.getElementById('cells').innerHTML = html;
```
